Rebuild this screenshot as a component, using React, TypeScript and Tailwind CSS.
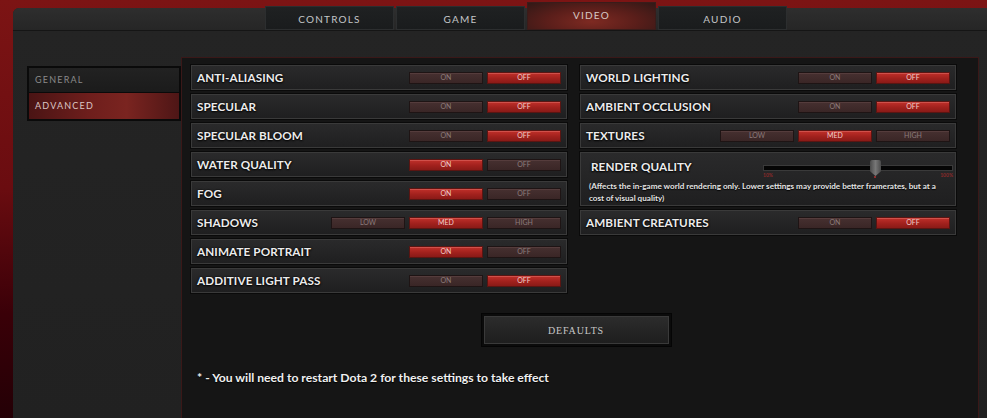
import React from "react";

type Row =
  | { kind: "toggle"; label: string; value: "ON" | "OFF" }
  | { kind: "triple"; label: string; value: "LOW" | "MED" | "HIGH" }
  | { kind: "slider"; label: string };

const leftRows: Row[] = [
  { kind: "toggle", label: "ANTI-ALIASING", value: "OFF" },
  { kind: "toggle", label: "SPECULAR", value: "OFF" },
  { kind: "toggle", label: "SPECULAR BLOOM", value: "OFF" },
  { kind: "toggle", label: "WATER QUALITY", value: "ON" },
  { kind: "toggle", label: "FOG", value: "ON" },
  { kind: "triple", label: "SHADOWS", value: "MED" },
  { kind: "toggle", label: "ANIMATE PORTRAIT", value: "ON" },
  { kind: "toggle", label: "ADDITIVE LIGHT PASS", value: "OFF" },
];

const rightRows: Row[] = [
  { kind: "toggle", label: "WORLD LIGHTING", value: "OFF" },
  { kind: "toggle", label: "AMBIENT OCCLUSION", value: "OFF" },
  { kind: "triple", label: "TEXTURES", value: "MED" },
  { kind: "slider", label: "RENDER QUALITY" },
  { kind: "toggle", label: "AMBIENT CREATURES", value: "OFF" },
];

const tabs = ["CONTROLS", "GAME", "VIDEO", "AUDIO"];

function OptButton({ text, active }: { text: string; active: boolean }) {
  return (
    <div
      className={
        active
          ? "flex h-[12px] w-[74px] items-center justify-center border border-[#5a1512] bg-[linear-gradient(180deg,#c0302a_0%,#a1211d_55%,#8a1a17_100%)] text-[7px] leading-none text-[#f0d0cc] shadow-[inset_0_1px_0_#d0504a]"
          : "flex h-[12px] w-[74px] items-center justify-center border border-[#1e1414] bg-[linear-gradient(180deg,#463030_0%,#3a2626_100%)] text-[7px] leading-none text-[#8c7c7c] shadow-[inset_0_1px_0_#553c3c]"
      }
    >
      {text}
    </div>
  );
}

function Label({ children }: { children: React.ReactNode }) {
  return (
    <div className="text-[11.7px] font-bold leading-none tracking-[0.1px] text-[#ececec] [text-shadow:0_1px_2px_#000,0_0_2px_#000]">
      {children}
    </div>
  );
}

function SettingRow({ row }: { row: Row }) {
  if (row.kind === "slider") {
    return (
      <div className="h-[54px] border border-[#3a3a3a] bg-[linear-gradient(180deg,#2a2a2b_0%,#1f1f20_100%)] px-[8px] pt-[7px] shadow-[0_0_0_1px_#0a0a0a]">
        <div className="flex items-start justify-between">
          <div className="pt-[1px] pl-[2px]">
            <Label>{row.label}</Label>
          </div>
          <div className="mt-[5px] mr-[-6px] flex w-[190px] flex-col">
            <div className="relative h-[6px] border border-[#3a3a3a] bg-[#050505]">
              <div className="absolute top-[-6px] left-[106px] h-[16px] w-[11px] rounded-t-[2px] bg-[linear-gradient(90deg,#4a4a4a,#777,#4a4a4a)] [clip-path:polygon(0_0,100%_0,100%_70%,50%_100%,0_70%)]" />
              <div className="absolute top-[10px] left-[110px] h-[2px] w-[2px] rounded-full bg-[#b03030]" />
            </div>
            <div className="mt-[2px] flex justify-between text-[5px] leading-none font-bold text-[#8a2a2a]">
              <span>10%</span>
              <span>100%</span>
            </div>
          </div>
        </div>
        <div className="mt-[2px] text-[8.1px] leading-[12px] font-bold text-[#e4e4e4] [text-shadow:0_1px_1px_#000]">
          (Affects the in-game world rendering only. Lower settings may provide better framerates, but at a cost of
          visual quality)
        </div>
      </div>
    );
  }
  const options = row.kind === "toggle" ? ["ON", "OFF"] : ["LOW", "MED", "HIGH"];
  return (
    <div className="flex h-[25px] items-center justify-between border border-[#3a3a3a] bg-[linear-gradient(180deg,#2a2a2b_0%,#1f1f20_100%)] pr-[5px] pl-[5px] shadow-[0_0_0_1px_#0a0a0a]">
      <Label>{row.label}</Label>
      <div className="flex gap-[4px]">
        {options.map((o) => (
          <OptButton key={o} text={o} active={o === row.value} />
        ))}
      </div>
    </div>
  );
}

export default function App() {
  return (
    <div
      className="h-[418px] w-[987px] overflow-hidden bg-[linear-gradient(180deg,#7c1414_0%,#6a0c10_45%,#3a0008_75%,#240006_100%)]"
      style={{ fontFamily: "Lato, 'Open Sans', sans-serif" }}
    >
      <div className="mt-[8px] ml-[13px] flex h-[410px] flex-col rounded-tl-[6px] bg-[#212121]">
        {/* top tab bar */}
        <div className="flex h-[23px] items-end rounded-tl-[6px] border-b border-[#151515] bg-[linear-gradient(180deg,#2e2e2e_0%,#262626_100%)] pl-[252px]">
          {tabs.map((t) => {
            const active = t === "VIDEO";
            return (
              <div
                key={t}
                className={
                  active
                    ? "mr-[2px] flex h-[28px] w-[129px] items-start justify-center bg-[radial-gradient(ellipse_at_50%_70%,#7e2a22_0%,#5a1e1a_50%,#2e1816_100%)] pt-[8px] text-[10px] leading-none tracking-[1.2px] text-[#d8c8c4] shadow-[inset_0_0_0_1px_#3a1c1a]"
                    : "mr-[2px] flex h-[24px] w-[129px] items-center justify-center border border-[#2c2e2f] bg-[linear-gradient(180deg,#1f2122_0%,#1a1c1d_100%)] pt-[1px] text-[10px] leading-none tracking-[1.2px] text-[#c4c6c8]"
                }
              >
                {t}
              </div>
            );
          })}
        </div>

        {/* body */}
        <div className="flex flex-1 bg-[linear-gradient(180deg,#242424_0%,#212121_100%)]">
          <div className="mt-[35px] ml-[14px] w-[154px]">
            <div className="border-[2px] border-[#0a0a0a] bg-[#0a0a0a]">
              <div className="flex h-[25px] items-center border-b border-[#0a0a0a] bg-[linear-gradient(180deg,#222_0%,#1b1b1b_100%)] pl-[6px] text-[9px] tracking-[1.2px] text-[#8a8a8a]">
                GENERAL
              </div>
              <div className="flex h-[26px] items-center bg-[linear-gradient(90deg,#4a1414_0%,#6e1e1c_40%,#7a2420_65%,#4e1616_100%)] pl-[6px] text-[9px] tracking-[1.2px] text-[#dcc6c4]">
                ADVANCED
              </div>
            </div>
          </div>

          <div className="mt-[26px] mr-[8px] flex flex-1 flex-col border-t border-l border-r border-[#3a1818] bg-[#151515] px-[9px] pt-[7px]">
            <div className="flex gap-[13px]">
              <div className="flex w-[376px] flex-col gap-[4px]">
                {leftRows.map((r) => (
                  <SettingRow key={r.label} row={r} />
                ))}
              </div>
              <div className="flex w-[376px] flex-col gap-[4px]">
                {rightRows.map((r) => (
                  <SettingRow key={r.label} row={r} />
                ))}
              </div>
            </div>

            <div className="mt-[20px] flex justify-center pr-[8px]">
              <div className="flex h-[34px] w-[191px] items-center justify-center border border-[#050505] bg-[#0b0b0b] p-[2px]">
                <div className="flex h-full w-full items-center justify-center border border-[#3a3a3a] bg-[linear-gradient(180deg,#2c2c2c_0%,#1e1e1e_100%)] text-[10px] tracking-[0.8px] text-[#c8c8c8]" style={{ fontFamily: "'Liberation Serif', serif" }}>
                  DEFAULTS
                </div>
              </div>
            </div>

            <div className="mt-[25px] pl-[6px] text-[12.2px] font-bold leading-none text-[#f0f0f0] [text-shadow:0_1px_1px_#000]">
              * - You will need to restart Dota 2 for these settings to take effect
            </div>
          </div>
        </div>
      </div>
    </div>
  );
}
